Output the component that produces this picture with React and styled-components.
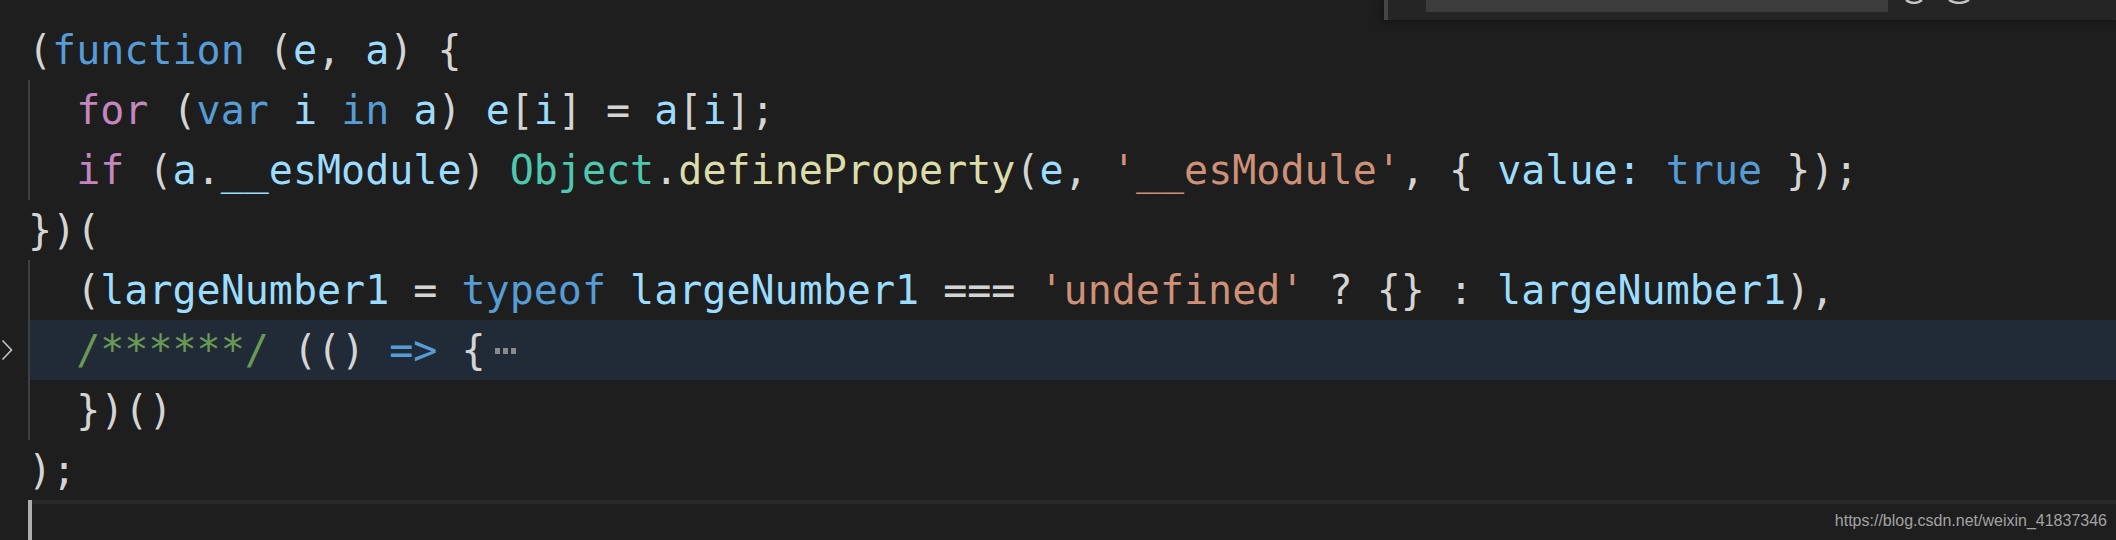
import React from 'react';
import styled, { createGlobalStyle } from 'styled-components';

const GlobalStyle = createGlobalStyle`
    html, body {
        margin: 0;
        height: 100%;
        overflow: hidden;
        background: #1e1e1e;
    }
    #root {
        height: 100%;
    }
`;

const tokenColors = {
    punct: '#d4d4d4',
    storage: '#569cd6',
    control: '#c586c0',
    variable: '#9cdcfe',
    type: '#4ec9b0',
    func: '#dcdcaa',
    string: '#ce9178',
    comment: '#6a9955',
};

const Editor = styled.div`
    position: relative;
    height: 100%;
    box-sizing: border-box;
    padding-top: 20px;
    background: #1e1e1e;
    font-family: "DejaVu Sans Mono", monospace;
    font-size: 40px;
    line-height: 60px;
    color: #d4d4d4;
`;

const Row = styled.div`
    display: flex;
    height: 60px;
`;

const Gutter = styled.div`
    width: 28px;
    flex: none;
    display: flex;
    align-items: center;
`;

const Code = styled.div`
    flex: 1;
    white-space: pre;
    background: ${p => (p.$folded ? '#212b37' : 'transparent')};
    box-shadow: ${p => {
        const list = [];
        if (p.$guide) list.push('inset 2px 0 0 #404040');
        if (p.$current) list.push('inset 0 4px 0 #282828');
        return list.length ? list.join(', ') : 'none';
    }};
`;

const Tok = styled.span`
    color: ${p => tokenColors[p.$k] || tokenColors.punct};
`;

const Cursor = styled.span`
    display: inline-block;
    width: 4px;
    height: 60px;
    vertical-align: top;
    background: #aeafad;
`;

const FoldDots = styled.span`
    display: inline-block;
    width: 21px;
    height: 6px;
    margin-left: 9px;
    vertical-align: 10px;
    background: linear-gradient(to right, #8a8a8a 5px, transparent 5px) 0 0 / 8px 6px repeat-x;
`;

const FindWidget = styled.div`
    position: absolute;
    top: 0;
    left: 1384px;
    right: 0;
    height: 20px;
    display: flex;
    align-items: flex-start;
    background: #252526;
    border-left: 4px solid #454545;
    box-shadow: 0 0 8px 2px rgba(0, 0, 0, 0.36);
`;

const FindInput = styled.div`
    margin-left: 38px;
    width: 462px;
    height: 12px;
    background: #3c3c3c;
`;

const WidgetIcon = styled.svg`
    display: block;
    margin-left: ${p => p.$gap}px;
`;

const Watermark = styled.div`
    position: absolute;
    top: 513px;
    right: 9px;
    font-family: "Liberation Sans", Arial, sans-serif;
    font-size: 16px;
    line-height: 16px;
    color: #a3a3a3;
`;

function Chevron() {
    return (
        <svg width="14" height="22" viewBox="0 0 14 22">
            <polyline points="2.5,1.5 11.5,11 2.5,20.5" fill="none" stroke="#c5c5c5" strokeWidth="1.6" />
        </svg>
    );
}

const T = ({ k, children }) => <Tok $k={k}>{children}</Tok>;

export default function App() {
    return (
        <>
            <GlobalStyle />
            <Editor>
                <Row>
                    <Gutter />
                    <Code>
                        <T k="punct">(</T><T k="storage">function</T><T k="punct"> (</T>
                        <T k="variable">e</T><T k="punct">, </T><T k="variable">a</T>
                        <T k="punct">) {'{'}</T>
                    </Code>
                </Row>
                <Row>
                    <Gutter />
                    <Code $guide>
                        {'  '}<T k="control">for</T><T k="punct"> (</T><T k="storage">var</T>{' '}
                        <T k="variable">i</T>{' '}<T k="storage">in</T>{' '}<T k="variable">a</T>
                        <T k="punct">) </T><T k="variable">e</T><T k="punct">[</T><T k="variable">i</T>
                        <T k="punct">] = </T><T k="variable">a</T><T k="punct">[</T><T k="variable">i</T>
                        <T k="punct">];</T>
                    </Code>
                </Row>
                <Row>
                    <Gutter />
                    <Code $guide>
                        {'  '}<T k="control">if</T><T k="punct"> (</T><T k="variable">a</T><T k="punct">.</T>
                        <T k="variable">__esModule</T><T k="punct">) </T><T k="type">Object</T><T k="punct">.</T>
                        <T k="func">defineProperty</T><T k="punct">(</T><T k="variable">e</T><T k="punct">, </T>
                        <T k="string">'__esModule'</T><T k="punct">, {'{'} </T><T k="variable">value:</T>{' '}
                        <T k="storage">true</T><T k="punct"> {'}'});</T>
                    </Code>
                </Row>
                <Row>
                    <Gutter />
                    <Code>
                        <T k="punct">{'})('}</T>
                    </Code>
                </Row>
                <Row>
                    <Gutter />
                    <Code $guide>
                        {'  '}<T k="punct">(</T><T k="variable">largeNumber1</T><T k="punct"> = </T>
                        <T k="storage">typeof</T>{' '}<T k="variable">largeNumber1</T><T k="punct"> === </T>
                        <T k="string">'undefined'</T><T k="punct"> ? {'{}'} : </T>
                        <T k="variable">largeNumber1</T><T k="punct">),</T>
                    </Code>
                </Row>
                <Row>
                    <Gutter>
                        <Chevron />
                    </Gutter>
                    <Code $guide $folded>
                        {'  '}<T k="comment">/******/</T><T k="punct"> (() </T><T k="storage">=&gt;</T>
                        <T k="punct"> {'{'}</T>
                        <FoldDots />
                    </Code>
                </Row>
                <Row>
                    <Gutter />
                    <Code $guide>
                        {'  '}<T k="punct">{'})()'}</T>
                    </Code>
                </Row>
                <Row>
                    <Gutter />
                    <Code>
                        <T k="punct">);</T>
                    </Code>
                </Row>
                <Row>
                    <Gutter />
                    <Code $current>
                        <Cursor />
                    </Code>
                </Row>

                <FindWidget>
                    <FindInput />
                    <WidgetIcon $gap={17} width="18" height="4" viewBox="0 0 18 4">
                        <path d="M1 0 Q9 6 17 0" fill="none" stroke="#c5c5c5" strokeWidth="2.4" />
                    </WidgetIcon>
                    <WidgetIcon $gap={25} width="22" height="4" viewBox="0 0 22 4">
                        <path d="M1 0 Q11 6 21 0" fill="none" stroke="#c5c5c5" strokeWidth="2.4" />
                    </WidgetIcon>
                </FindWidget>

                <Watermark>https://blog.csdn.net/weixin_41837346</Watermark>
            </Editor>
        </>
    );
}
